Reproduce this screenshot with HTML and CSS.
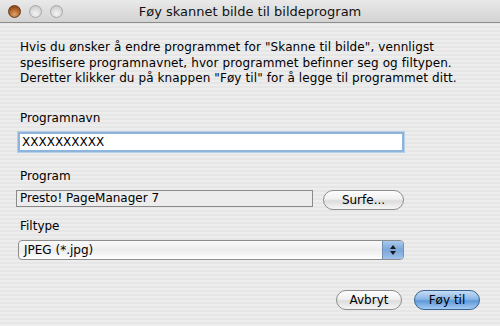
FILE: index.html
```html
<!DOCTYPE html>
<html lang="no">
<head>
    <meta charset="UTF-8">
    <title>Føy skannet bilde til bildeprogram</title>
    <link rel="stylesheet" href="styles.css">
</head>
<body>
    <div class="window">
        <div class="titlebar">
            <div class="lights">
                <span class="light close"></span>
                <span class="light"></span>
                <span class="light"></span>
            </div>
            <div class="title">Føy skannet bilde til bildeprogram</div>
        </div>

        <div class="content">
            <p class="intro">Hvis du ønsker å endre programmet for "Skanne til bilde", vennligst spesifisere programnavnet, hvor programmet befinner seg og filtypen. Deretter klikker du på knappen "Føy til" for å legge til programmet ditt.</p>

            <label class="label first">Programnavn</label>
            <div class="name-field">XXXXXXXXXX</div>

            <label class="label">Program</label>
            <div class="row">
                <div class="path-field">Presto! PageManager 7</div>
                <button class="btn surfe">Surfe...</button>
            </div>

            <label class="label tight">Filtype</label>
            <div class="select">
                <span class="select-text">JPEG (*.jpg)</span>
                <span class="select-arrows">
                    <svg width="8" height="12" viewBox="0 0 8 12">
                        <path d="M4 1 L7 5 L1 5 Z" fill="#1a1a1a"/>
                        <path d="M4 11 L7 7 L1 7 Z" fill="#1a1a1a"/>
                    </svg>
                </span>
            </div>

            <div class="actions">
                <button class="btn">Avbryt</button>
                <button class="btn primary">Føy til</button>
            </div>
        </div>
    </div>
</body>
</html>
```

FILE: styles.css
```css
body {
    margin: 0;
    font-family: "DejaVu Sans", "Liberation Sans", sans-serif;
    color: #000;
}

.window {
    width: 500px;
    height: 326px;
    background: repeating-linear-gradient(#ededed 0px, #ededed 2px, #e6e6e6 2px, #e6e6e6 4px);
    overflow: hidden;
}

.titlebar {
    height: 22px;
    display: flex;
    align-items: center;
    background: linear-gradient(#e9e9e9, #d3d3d3);
    border-bottom: 1px solid #8c8c8c;
    position: relative;
}

.lights {
    display: flex;
    gap: 8px;
    padding-left: 8px;
}

.light {
    width: 13px;
    height: 13px;
    border-radius: 50%;
    box-sizing: border-box;
    border: 1px solid #a7a7a7;
    background: radial-gradient(circle at 50% 70%, #f4f4f4, #d2d2d2 70%, #b9b9b9);
}

.light.close {
    border-color: #6d3a14;
    background: radial-gradient(circle at 50% 75%, #e0a26a, #a55a22 60%, #6e3510);
}

.title {
    position: absolute;
    left: 0;
    right: 0;
    text-align: center;
    font-size: 13px;
    color: #111;
}

.content {
    padding: 17px 18px 0 18px;
}

.intro {
    margin: 0 0 0 2px;
    font-size: 12px;
    line-height: 15.5px;
    letter-spacing: 0.1px;
}

.label {
    display: block;
    font-size: 12px;
    margin: 17px 0 7px 2px;
}

.label.first {
    margin-top: 24px;
}

.label.tight {
    margin-top: 9px;
}

.name-field {
    width: 386px;
    height: 20px;
    box-sizing: border-box;
    background: #fff;
    border: 2px solid #8fb4dc;
    box-shadow: 0 0 0 1px #b5cfe9;
    font-size: 12px;
    line-height: 16px;
    padding-left: 2px;
}

.row {
    display: flex;
    align-items: flex-start;
    gap: 10px;
    margin-left: -2px;
}

.path-field {
    width: 297px;
    height: 17px;
    box-sizing: border-box;
    border: 1px solid #8a8a8a;
    background: #ececec;
    font-size: 12px;
    line-height: 15px;
    padding-left: 3px;
}

.btn {
    font-family: "DejaVu Sans", "Liberation Sans", sans-serif;
    font-size: 12px;
    height: 20px;
    padding: 0;
    border: 1px solid #8d8d8d;
    border-radius: 10px;
    background: linear-gradient(#fdfdfd 0%, #f0f0f0 45%, #dcdcdc 55%, #f6f6f6 100%);
    color: #000;
}

.surfe {
    width: 81px;
}

.select {
    width: 386px;
    height: 20px;
    box-sizing: border-box;
    display: flex;
    border: 1px solid #8d8d8d;
    border-radius: 4px;
    overflow: hidden;
    background: linear-gradient(#fafafa, #ececec 50%, #fff);
}

.select-text {
    flex: 1;
    font-size: 12px;
    line-height: 18px;
    padding-left: 5px;
}

.select-arrows {
    width: 20px;
    display: flex;
    align-items: center;
    justify-content: center;
    border-left: 1px solid #6f8fb5;
    background: linear-gradient(#a9c8ec, #7aa6d9 50%, #9fc3ec);
}

.actions {
    display: flex;
    justify-content: flex-end;
    gap: 12px;
    margin: 30px 2px 0 0;
}

.actions .btn {
    width: 66px;
}

.btn.primary {
    border-color: #39648f;
    background: linear-gradient(#c6dcf4 0%, #8db8e6 45%, #5f98d8 55%, #a5cbf3 100%);
}
```
